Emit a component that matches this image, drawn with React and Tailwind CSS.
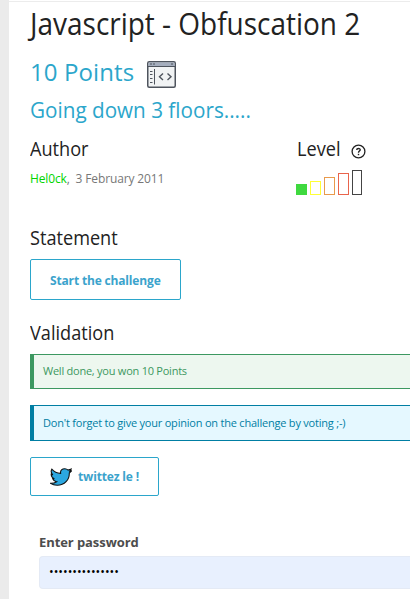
import React from 'react';

function CodeWindowIcon() {
  return (
    <svg className="ml-[13px] block h-[27px] w-[29px]" viewBox="0 0 29 27" fill="none">
      <rect x="0.75" y="0.75" width="27.5" height="25.5" rx="1.5" fill="#f1f3f4" stroke="#4e545d" strokeWidth="1.5" />
      <rect x="1.5" y="1.5" width="26" height="3.5" fill="#a4adbd" />
      <path d="M1 5.5H28" stroke="#4e545d" />
      <path d="M3 3H5M6 3H8M24 3H26" stroke="#4e545d" />
      <path d="M7.5 8V23.5" stroke="#4e545d" />
      <path d="M3 10.5H5.5M3 13.5H5.5M3 17.5H5.5M3 21.5H5.5" stroke="#4e545d" />
      <path d="M16 12.5L12.5 15.8L16 19M20.5 12.5L24 15.8L20.5 19" stroke="#4e545d" strokeWidth="1.4" />
    </svg>
  );
}

function HelpIcon() {
  return (
    <svg className="mt-[9px] block h-[15px] w-[15px]" viewBox="0 0 15 15" fill="none" stroke="#222">
      <circle cx="7.5" cy="7.5" r="6.4" strokeWidth="1.3" />
      <path d="M5.7 6C5.7 3.9 9.2 4 9.2 5.8C9.2 7.1 7.5 7 7.5 8.7" strokeWidth="1.4" />
      <path d="M7.5 9.8V11.2" strokeWidth="1.4" />
    </svg>
  );
}

function BirdIcon() {
  return (
    <svg className="block h-[18px] w-[22px]" viewBox="0 0 22 18">
      <path
        d="M1.8 1.2C4.2 4 7 5.3 10.6 5.4C10.1 2.3 12.2.7 14.7.7C16.2.7 17.3 1.3 18.1 2.1L21.2 1L19.8 3.1L21.5 2.9L19.3 5C19.5 11.8 14.5 17.3 7.3 17.3C4.7 17.3 2.4 16.7.6 15.4C3 15.5 5 14.9 6.6 13.7C4.6 13.5 3.3 12.3 2.7 10.8H4.4C2.4 10 1.2 8.5 1.2 6.3L2.9 6.8C1.1 5.2.8 3.1 1.8 1.2Z"
        fill="#2ca7e0"
        stroke="#111"
        strokeWidth="1.1"
      />
    </svg>
  );
}

const heading = 'h-7 origin-left scale-x-[0.907] whitespace-nowrap text-[20px] leading-7 text-[#222]';

export default function App() {
  return (
    <div className="flex h-[599px] w-[410px] overflow-hidden bg-white font-['Open_Sans',sans-serif]">
      <div className="w-[9px] shrink-0 bg-[#ebebeb]" />
      <main className="min-w-0 flex-1">
        <div className="mt-px h-px bg-[#ececec]" />
        <div className="pl-[21px]">
          <h1 className="h-[54px] origin-left scale-x-[0.902] whitespace-nowrap text-[31px] leading-[42px] text-[#222]">Javascript - Obfuscation 2</h1>
          <div className="flex h-10 text-[#2ba6cb]">
            <h2 className="w-[104px] whitespace-nowrap text-[24px] leading-8 tracking-[0.1px]">10 Points</h2>
            <div className="pt-[5px]"><CodeWindowIcon /></div>
          </div>
          <h3 className="h-[39px] origin-left scale-x-[0.962] whitespace-nowrap text-[21.5px] leading-7 text-[#2ba6cb]">Going down 3 floors.....</h3>
          <div className="flex h-[89px]">
            <div className="w-[267px]">
              <h4 className={heading}>Author</h4>
              <p className="mt-2 whitespace-nowrap text-[12px] leading-4 tracking-[-0.14px] text-[#777]">
                <span className="text-[#00d500]">Hel0ck</span>,&nbsp; 3 February 2011
              </p>
            </div>
            <div>
              <div className="flex">
                <div className="w-[54px]">
                  <h4 className={heading}>Level</h4>
                </div>
                <HelpIcon />
              </div>
              <div className="-ml-px mt-[7px] flex h-[25px] items-end gap-[3px]">
                <span className="h-[11px] w-[11px] bg-[#3fd93f]" />
                <span className="h-[14px] w-[11px] border border-[#ffff35]" />
                <span className="h-[18px] w-[11px] border border-[#e99a4c]" />
                <span className="h-[22px] w-[11px] border border-[#e9644c]" />
                <span className="h-[25px] w-[10px] border border-[#444]" />
              </div>
            </div>
          </div>
          <h4 className={heading}>Statement</h4>
          <button className="mt-[7px] flex h-[41px] w-[151px] items-center rounded-[2px] border border-[#2ba6cb] pl-[19px] pt-[2px] text-[12px] font-bold tracking-[-0.16px] whitespace-nowrap text-[#3ba3cc]">Start the challenge</button>
          <div className="pt-[19px]">
            <h4 className={heading}>Validation</h4>
          </div>
          <div className="mt-[7px] flex h-[35px] items-center border-y border-l-4 border-[#3c9860] bg-[#edf7ef] pl-[9px] text-[11px] tracking-[-0.24px] text-[#3c9860]">Well done, you won 10 Points</div>
          <div className="mt-4 flex h-9 items-center border-y border-l-4 border-[#007ea3] bg-[#e5f8ff] pl-[9px] text-[11px] tracking-[-0.21px] whitespace-nowrap text-[#007ea3]">Don't forget to give your opinion on the challenge by voting ;-)</div>
          <button className="mt-4 flex h-[39px] w-[129px] items-center gap-[6px] rounded-[2px] border border-[#2ba6cb] pl-[19px] text-[12px] font-bold tracking-[-0.16px] whitespace-nowrap text-[#3ba3cc]">
            <BirdIcon />
            <span>twittez le !</span>
          </button>
          <div className="pl-[9px] pt-[37px]">
            <label className="block h-[23px] text-[13px] leading-[18px] font-bold tracking-[-0.08px] whitespace-nowrap text-[#4d4d4d]">Enter password</label>
            <div className="flex h-[33px] items-center rounded-l-[4px] border border-r-0 border-[#e4eaf5] bg-[#e8f0fe] pl-[9px] text-[12.4px] text-black">•••••••••••••••</div>
          </div>
        </div>
      </main>
    </div>
  );
}
